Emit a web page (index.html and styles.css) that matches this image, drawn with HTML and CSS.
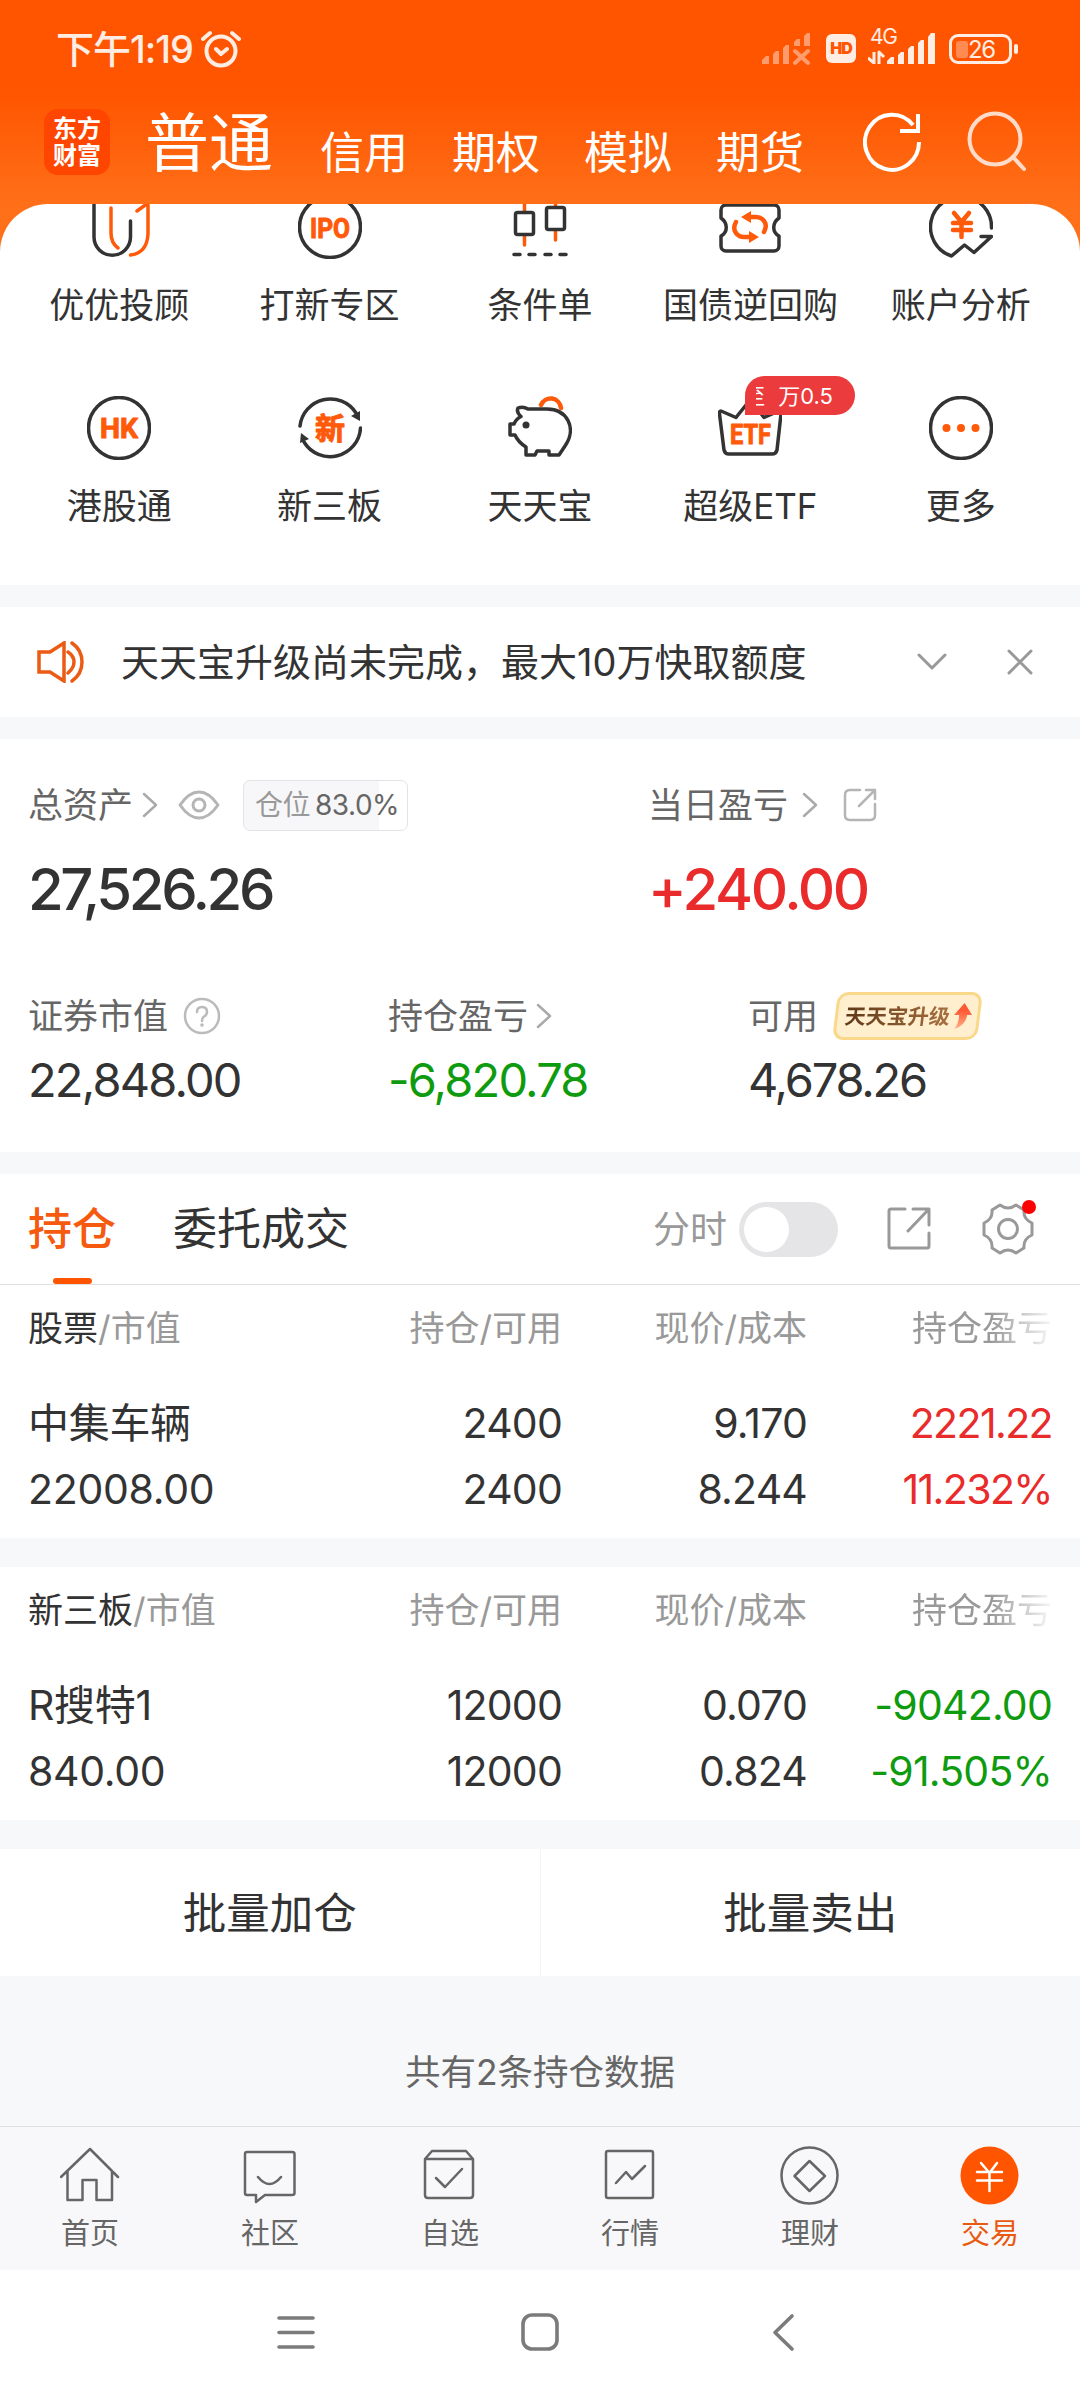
FILE: index.html
```html
<!DOCTYPE html>
<html lang="zh-CN">
<head>
  <meta charset="UTF-8" />
  <meta name="viewport" content="width=device-width, initial-scale=1.0" />
  <title>交易 - 东方财富</title>
  <link rel="stylesheet" href="styles.css">
</head>
<body>
  <header>
    <div class="status-bar">
      <div class="status-left">
        <span class="time">下午1:19</span>
        <svg class="alarm" width="40" height="38" viewBox="0 0 40 38">
          <circle cx="20" cy="21" r="14.5" />
          <path d="M2 9L9 3M38 9L31 3M15 19l5 5 6-5" />
        </svg>
      </div>
      <div class="status-right">
        <svg width="48" height="32" viewBox="0 0 48 32" class="no-signal">
          <path d="M0 31v-4l4-4h3v8zM11 31V21l3-3h3v13zM21 31V15l3-3h3v19zM32 13V9l3-3h3v7zM42 13V3l3-3h3v13z" />
          <path class="cross" d="M33 18l13 12M46 18L33 30" />
        </svg>
        <span class="hd">HD</span>
        <svg width="68" height="42" viewBox="0 0 68 42" class="signal">
          <text x="2" y="20" textLength="28">4G</text>
          <path d="M19 40v-3l4-4h3v7zM30 40V31l3-3h3v12zM40 40V25l3-3h3v18zM50 40V19l3-3h3v24zM60 40V13l3-4h4v31z" />
          <path class="arrows" d="M6 28V40M0 34L6 39M11 40V28L16 33" />
        </svg>
        <div class="battery"><span class="battery-level"></span><span class="battery-text">26</span></div>
      </div>
    </div>
    <nav class="top-nav">
      <div class="logo"><span>东方</span><span>财富</span></div>
      <ul>
        <li class="active">普通</li>
        <li>信用</li>
        <li>期权</li>
        <li>模拟</li>
        <li>期货</li>
      </ul>
      <svg class="refresh" width="60" height="62" viewBox="0 0 60 62">
        <path d="M56 31A27 27.5 0 1 1 50 14M55 3V20H37" />
      </svg>
      <svg class="search" width="60" height="62" viewBox="0 0 60 62">
        <circle cx="28" cy="28" r="25.5" />
        <path d="M46 46L57 58" />
      </svg>
    </nav>
  </header>

  <section class="shortcuts">
    <div class="shortcut">
      <svg class="icon" viewBox="0 0 64 64">
        <path d="M7 0V42a18.2 18.2 0 0 0 36.5 0V26" />
        <path class="orange" d="M24 13V38Q24 48 31 53M50 16L61 8V39Q60 58 43.500 60" />
      </svg>
      <span>优优投顾</span>
    </div>
    <div class="shortcut">
      <svg class="icon" viewBox="0 0 64 64">
        <circle cx="32" cy="32" r="30.500" />
        <text x="12" y="42.500" textLength="40" lengthAdjust="spacingAndGlyphs">IPO</text>
      </svg>
      <span>打新专区</span>
    </div>
    <div class="shortcut">
      <svg class="icon" viewBox="0 0 64 64">
        <path class="orange" d="M16.500 6V17M16.500 40V50M47.500 2V12M47.500 36V45" />
        <rect x="7.500" y="17.500" width="18" height="22" rx="2" />
        <rect x="38.500" y="12.500" width="18" height="22" rx="2" />
        <path d="M6 59.500h6M21 59.500h6M37 59.500h6M52 59.500h6" />
      </svg>
      <span>条件单</span>
    </div>
    <div class="shortcut">
      <svg class="icon" viewBox="0 0 64 64">
        <path d="M8 10H56a5 5 0 0 1 5 5V23C54 28 54 37 61 41V51a5 5 0 0 1-5 5H8a5 5 0 0 1-5-5V41C10 37 10 28 3 23V15a5 5 0 0 1 5-5z" />
        <path class="orange thick" d="M18 27C13 36 20 42 26 42H32M46 37C51 28 44 22 38 22H32" />
        <path class="orange-fill" d="M31 36L41 42L31 48zM33 16L23 22L33 28z" />
      </svg>
      <span>国债逆回购</span>
    </div>
    <div class="shortcut">
      <svg class="icon" viewBox="0 0 64 64">
        <path d="M62.500 33A30.500 30.500 0 1 0 22.500 61L35.500 50L45 57.500L62.500 41.500H52" />
        <path class="orange thick" d="M25 18L32.500 27L40 18M24 28H42M24 35H42M32.500 27V42" />
      </svg>
      <span>账户分析</span>
    </div>
    <div class="shortcut">
      <svg class="icon" viewBox="0 0 64 64">
        <circle cx="32" cy="32" r="30.500" />
        <text x="13" y="42" textLength="38" lengthAdjust="spacingAndGlyphs">HK</text>
      </svg>
      <span>港股通</span>
    </div>
    <div class="shortcut">
      <svg class="icon" viewBox="0 0 64 64">
        <path d="M2 30A30.500 30.500 0 0 1 58 17M62.500 32A30.500 30.500 0 0 1 6 46" />
        <path class="dark-fill" d="M53 20L62 15V25zM3 37L11 43L2 47z" />
        <text class="cjk" x="17" y="43">新</text>
      </svg>
      <span>新三板</span>
    </div>
    <div class="shortcut">
      <svg class="icon" viewBox="0 0 64 64">
        <path class="orange thick" d="M33 9A10.500 11 0 0 1 53 12" />
        <path d="M10 12Q15 10 20 13H37C60 12 69 33 57 50L51 59H41V55H29L27 59H18V51Q10 46 7 39H2V28H6Q8 23 13 20.500Q8 16 10 12z" />
        <circle class="dark-fill" cx="18" cy="29" r="3.500" />
      </svg>
      <span>天天宝</span>
    </div>
    <div class="shortcut">
      <svg class="icon" viewBox="0 0 64 64">
        <path d="M3 15L18 21.500L32 4L46 21.500L61 15Q63 15 63 18L59 54Q58 58 54 58H11Q7 58 6 54L1.500 18Q1 15 3 15z" />
        <text x="12" y="48" textLength="41" lengthAdjust="spacingAndGlyphs">ETF</text>
      </svg>
      <span>超级ETF</span>
      <div class="badge"><span class="badge-clip"><i>至</i></span><span>万0.5</span></div>
    </div>
    <div class="shortcut">
      <svg class="icon" viewBox="0 0 64 64">
        <circle cx="32" cy="32" r="30.500" />
        <circle class="orange-fill" cx="17.500" cy="32" r="4" />
        <circle class="orange-fill" cx="32" cy="32" r="4" />
        <circle class="orange-fill" cx="46.500" cy="32" r="4" />
      </svg>
      <span>更多</span>
    </div>
  </section>

  <section class="notice">
    <svg class="speaker" width="48" height="42" viewBox="0 0 48 42">
      <path d="M2 11H13L27 2V40L13 31H2zM35 2Q45 9 45 21T35 40M31 11Q37 15 37 21T31 32" />
    </svg>
    <p>天天宝升级尚未完成，最大10万快取额度</p>
    <svg class="grey-icon down" width="30" height="20" viewBox="0 0 30 20"><path d="M2 3L15 16L28 3" /></svg>
    <svg class="grey-icon close" width="26" height="26" viewBox="0 0 26 26"><path d="M2 2L24 24M24 2L2 24" /></svg>
  </section>

  <section class="assets">
    <div class="assets-top">
      <div>
        <div class="label">
          <span>总资产</span>
          <svg class="arrow" width="16" height="26" viewBox="0 0 16 26"><path d="M2 2L14 13L2 24" /></svg>
          <svg class="eye" width="42" height="30" viewBox="0 0 42 30">
            <path d="M2 15Q11 2 21 2T40 15Q31 28 21 28T2 15z" />
            <circle cx="21" cy="15" r="6" />
          </svg>
          <span class="position"><em>仓位</em>83.0%</span>
        </div>
        <div class="total">27,526.26</div>
      </div>
      <div>
        <div class="label">
          <span>当日盈亏</span>
          <svg class="arrow wide" width="16" height="26" viewBox="0 0 16 26"><path d="M2 2L14 13L2 24" /></svg>
          <svg class="share" width="34" height="34" viewBox="0 0 34 34">
            <path d="M17 2H7Q2 2 2 7V27Q2 32 7 32H27Q32 32 32 27V16M23 2H32V11M31 3L16 18" />
          </svg>
        </div>
        <div class="total profit red">+240.00</div>
      </div>
    </div>
    <div class="assets-bottom">
      <div>
        <div class="label">
          <span>证券市值</span>
          <svg class="help" width="38" height="38" viewBox="0 0 38 38">
            <circle cx="19" cy="19" r="17" />
            <path d="M14 15Q14 10 19 10T24 15Q24 18 20.500 20Q19 21 19 24" />
            <circle class="dot" cx="19" cy="28" r="1.800" />
          </svg>
        </div>
        <div class="amount">22,848.00</div>
      </div>
      <div>
        <div class="label">
          <span>持仓盈亏</span>
          <svg class="arrow near" width="16" height="26" viewBox="0 0 16 26"><path d="M2 2L14 13L2 24" /></svg>
        </div>
        <div class="amount green">-6,820.78</div>
      </div>
      <div>
        <div class="label">
          <span>可用</span>
          <div class="upgrade">
            <span>天天宝升级</span>
            <svg width="20" height="26" viewBox="0 0 20 26">
              <defs><linearGradient id="up" x1="0" y1="0" x2="0" y2="1"><stop offset="0.3" stop-color="#ff5a36" /><stop offset="1" stop-color="#ffb088" /></linearGradient></defs>
              <path fill="url(#up)" d="M10 0L19 12H14Q14 22 3 26Q7 19 6 12H1z" />
            </svg>
          </div>
        </div>
        <div class="amount cash">4,678.26</div>
      </div>
    </div>
  </section>

  <section class="holdings">
    <div class="tabs">
      <div class="tab active">持仓</div>
      <div class="tab">委托成交</div>
      <span class="minute">分时</span>
      <div class="toggle"></div>
      <svg class="export" width="44" height="44" viewBox="0 0 44 44">
        <path d="M18 2H4Q2 2 2 4V39Q2 41 4 41H40Q42 41 42 39V26M26 2H42V18M41 3L21 24" />
      </svg>
      <div class="settings">
        <svg width="52" height="52" viewBox="0 0 52 52">
          <path d="M18 2Q26 8 34 2L42 7Q41 16 50 20V32Q41 36 42 45L34 50Q26 44 18 50L10 45Q11 36 2 32V20Q11 16 10 7z" />
          <circle cx="26" cy="26" r="9.500" />
        </svg>
        <i class="red-dot"></i>
      </div>
    </div>

    <div class="stock-table">
      <div class="row head">
        <span><b>股票</b>/市值</span><span>持仓/可用</span><span>现价/成本</span><span class="fade">持仓盈亏</span>
      </div>
      <div class="row"><span>中集车辆</span><span>2400</span><span>9.170</span><span class="red">2221.22</span></div>
      <div class="row"><span>22008.00</span><span>2400</span><span>8.244</span><span class="red">11.232%</span></div>
    </div>
    <div class="stock-table">
      <div class="row head">
        <span><b>新三板</b>/市值</span><span>持仓/可用</span><span>现价/成本</span><span class="fade">持仓盈亏</span>
      </div>
      <div class="row"><span>R搜特1</span><span>12000</span><span>0.070</span><span class="green">-9042.00</span></div>
      <div class="row"><span>840.00</span><span>12000</span><span>0.824</span><span class="green">-91.505%</span></div>
    </div>

    <div class="batch">
      <button>批量加仓</button>
      <button>批量卖出</button>
    </div>
    <p class="count">共有2条持仓数据</p>
  </section>

  <footer>
    <div class="foot-item">
      <svg viewBox="0 0 60 60"><path d="M1 31L30 3L58 31M7.500 25V54H22.500V34H36.500V54H52V25" /></svg>
      <span>首页</span>
    </div>
    <div class="foot-item">
      <svg viewBox="0 0 60 60"><path d="M7 6H52Q54.500 6 54.500 8V47Q54.500 49 52 49H25L16 56V49H7Q5 49 5 47V8Q5 6 7 6zM18 31Q29.500 45 41 31" /></svg>
      <span>社区</span>
    </div>
    <div class="foot-item">
      <svg viewBox="0 0 60 60"><path d="M5 13L12 5H46L53 13V49Q53 52 50 52H8Q5 52 5 49zM5 13H53M16 32L25 41L42 23" /></svg>
      <span>自选</span>
    </div>
    <div class="foot-item">
      <svg viewBox="0 0 60 60"><rect x="6" y="5" width="47" height="47" rx="2" /><path d="M16 37L26 26L32 33L45 20" /></svg>
      <span>行情</span>
    </div>
    <div class="foot-item">
      <svg viewBox="0 0 60 60"><circle cx="29.500" cy="29.500" r="28" /><path d="M29.500 15L45 30L29.500 45L14.500 30z" /></svg>
      <span>理财</span>
    </div>
    <div class="foot-item active">
      <svg viewBox="0 0 60 60"><circle cx="29.500" cy="29.500" r="29" /><path d="M21 17L29.500 27L37 17M17 26H42M17 34.500H42M29.500 26V45" /></svg>
      <span>交易</span>
    </div>
  </footer>

  <div class="system-nav">
    <svg viewBox="0 0 40 40"><path d="M3 6H37M3 20.500H37M3 35H37" /></svg>
    <svg viewBox="0 0 40 40"><rect x="3" y="3" width="34" height="34" rx="9" /></svg>
    <svg viewBox="0 0 40 40"><path d="M28 4L11 20.500L28 37" /></svg>
  </div>
</body>
</html>
```
FILE: styles.css
```css
* {
  margin: 0;
  padding: 0;
  box-sizing: border-box;
}

body {
  width: 1080px;
  font-family: Inter, "Noto Sans CJK SC", sans-serif;
  background-color: #f7f8fa;
  color: #333;
  line-height: 1;
}

svg {
  display: block;
  flex: none;
  fill: none;
  stroke-linecap: round;
  stroke-linejoin: round;
}

.red {
  color: #e92b2b;
}

.green {
  color: #0f9b0f;
}

/* header */
header {
  height: 252px;
  background: linear-gradient(#ff5500 0, #ff5500 92px, #ff6f18 204px, #ff7019 252px);
  color: #fff;
}

.status-bar {
  height: 97px;
  padding: 0 62px 0 56px;
  display: flex;
  justify-content: space-between;
  align-items: center;
}

.status-left,
.status-right {
  display: flex;
  align-items: center;
  color: #ffece3;
}

.time {
  font-size: 38px;
  font-weight: 500;
  letter-spacing: -1px;
}

.alarm {
  margin-left: 8px;
  stroke: #ffece3;
  stroke-width: 4;
}

.no-signal {
  fill: #ff9c6d;
}

.cross {
  stroke: #ff9c6d;
  stroke-width: 4;
}

.hd {
  width: 30px;
  height: 29px;
  margin-left: 16px;
  border-radius: 6px;
  background: #ffece3;
  color: #ff5500;
  font-size: 16px;
  font-weight: 900;
  line-height: 29px;
  text-align: center;
  letter-spacing: -1px;
}

.signal {
  margin: -8px 0 0 12px;
  fill: #ffece3;
}

.signal text {
  font-size: 21px;
}

.arrows {
  fill: none;
  stroke: #ffece3;
  stroke-width: 3;
  stroke-linecap: butt;
}

.battery {
  position: relative;
  width: 63px;
  height: 30px;
  margin: 0 6px 0 13px;
  padding: 4px;
  border: 3px solid #ffece3;
  border-radius: 9px;
  display: flex;
}

.battery::after {
  content: "";
  position: absolute;
  right: -9px;
  top: 7px;
  width: 4px;
  height: 10px;
  border-radius: 2px;
  background: #ffece3;
}

.battery-level {
  width: 12px;
  height: 17px;
  border-radius: 3px;
  background: #ff8a52;
}

.battery-text {
  font-size: 24px;
  line-height: 17px;
  letter-spacing: -1.5px;
}

.top-nav {
  height: 107px;
  padding-left: 44px;
  display: flex;
}

.logo {
  width: 66px;
  height: 66px;
  margin-top: 12px;
  border-radius: 14px;
  background: #ff4600;
  display: flex;
  flex-direction: column;
  justify-content: center;
  align-items: center;
  gap: 3px;
  font-size: 24px;
  font-weight: 700;
}

.top-nav ul {
  width: 754px;
  height: 78px;
  padding-left: 35px;
  list-style: none;
  display: flex;
  align-items: flex-end;
  gap: 44px;
  font-size: 44px;
}

.top-nav .active {
  font-size: 64px;
  margin-right: 3px;
}

.refresh {
  margin: 14px 0 0 -1px;
  stroke: #fff;
  stroke-width: 4;
  stroke-linecap: butt;
  stroke-linejoin: miter;
}

.search {
  margin: 14px 0 0 44px;
  stroke: #ffdcca;
  stroke-width: 4;
}

/* shortcuts */
.shortcuts {
  position: relative;
  height: 381px;
  margin-top: -48px;
  padding: 0 14px;
  border-radius: 48px 48px 0 0;
  background: #fff;
  overflow: hidden;
  display: grid;
  grid-template-columns: repeat(5, 1fr);
  grid-auto-rows: 201px;
}

.shortcut {
  position: relative;
  margin-top: -9px;
  display: flex;
  flex-direction: column;
  align-items: center;
  font-size: 35px;
  white-space: nowrap;
}

.icon {
  width: 64px;
  height: 64px;
  margin-bottom: 29px;
  stroke: #333;
  stroke-width: 3.5;
}

.icon text {
  fill: #ff5a0a;
  stroke: #ff5a0a;
  stroke-width: 1;
  font-family: Roboto, sans-serif;
  font-size: 28px;
  font-weight: 700;
}

.icon .cjk {
  font-family: "Noto Sans CJK SC", sans-serif;
  font-size: 30px;
}

.icon .orange {
  stroke: #ff5a0a;
}

.thick {
  stroke-width: 4.5;
}

.orange-fill {
  fill: #ff5a0a;
  stroke: none;
}

.dark-fill {
  fill: #333;
  stroke: none;
}

.badge {
  position: absolute;
  left: 100px;
  top: -20px;
  width: 110px;
  height: 39px;
  padding-left: 11px;
  border-radius: 20px 20px 20px 0;
  background: #eb3b3c;
  color: #fff;
  font-size: 22px;
  display: flex;
  align-items: center;
  gap: 13px;
}

.badge-clip {
  width: 9px;
  overflow: hidden;
  display: flex;
  justify-content: flex-end;
}

.badge-clip i {
  font-style: normal;
}

/* notice */
.notice {
  height: 110px;
  margin: 22px 0;
  padding-left: 37px;
  background: #fff;
  display: flex;
  align-items: center;
}

.speaker {
  stroke: #ec5b13;
  stroke-width: 3.5;
  stroke-linejoin: miter;
}

.notice p {
  width: 794px;
  margin-left: 36px;
  font-size: 38px;
  white-space: nowrap;
}

.grey-icon {
  stroke: #999;
  stroke-width: 3;
}

.down {
  margin-left: 2px;
}

.close {
  margin-left: 60px;
}

/* assets */
.assets {
  height: 413px;
  padding: 38px 28px 0;
  background: #fff;
}

.assets-top {
  display: grid;
  grid-template-columns: 620px 1fr;
  height: 211px;
}

.assets-bottom {
  display: grid;
  grid-template-columns: 360px 360px 1fr;
}

.label {
  height: 56px;
  display: flex;
  align-items: center;
  color: #666;
  font-size: 35px;
}

.arrow {
  margin-left: 9px;
  stroke: #aaa;
  stroke-width: 2.5;
}

.arrow.wide {
  margin-left: 14px;
}

.arrow.near {
  margin-left: 8px;
}

.eye {
  margin-left: 20px;
  stroke: #b5b5b5;
  stroke-width: 3;
}

.position {
  height: 51px;
  width: 165px;
  margin-left: 23px;
  padding-left: 11px;
  border: 1px solid #e3e3e5;
  border-radius: 7px;
  background: linear-gradient(90deg, #f7f7f9 83%, #fff 83%);
  display: flex;
  align-items: center;
  font-size: 28px;
  letter-spacing: -0.5px;
}

.position em {
  margin-right: 5px;
  font-style: normal;
  color: #999;
}

.share {
  margin-left: 25px;
  stroke: #b5b5b5;
  stroke-width: 2.5;
}

.total {
  margin-top: 27px;
  font-size: 58px;
  font-weight: 500;
  line-height: 58px;
  letter-spacing: -3.4px;
}

.total.profit {
  letter-spacing: -2.4px;
}

.help {
  margin-left: 15px;
  stroke: #bbb;
  stroke-width: 2.5;
}

.help .dot {
  fill: #bbb;
  stroke: none;
}

.amount {
  margin-top: 12px;
  font-size: 47px;
  line-height: 48px;
  letter-spacing: -1.8px;
}

.amount.cash {
  letter-spacing: -2.2px;
}

.upgrade {
  width: 145px;
  height: 48px;
  margin-left: 17px;
  padding: 0 0 0 7px;
  border: 3px solid #f9d88a;
  border-radius: 11px;
  background: #ffefce;
  transform: skewX(-7deg);
  display: flex;
  align-items: center;
  gap: 3px;
}

.upgrade span {
  font-size: 21px;
  font-weight: 700;
  white-space: nowrap;
  color: transparent;
  background: linear-gradient(90deg, #5f3818, #a8703f);
  background-clip: text;
  -webkit-background-clip: text;
}

/* holdings */
.tabs {
  height: 111px;
  margin-top: 22px;
  padding-left: 28px;
  background: #fff;
  border-bottom: 1px solid #e0e0e0;
  display: flex;
  align-items: center;
  font-size: 44px;
}

.tab {
  height: 110px;
  margin-right: 57px;
  line-height: 110px;
}

.tab.active {
  color: #f55a0e;
  font-weight: 500;
  display: flex;
  flex-direction: column;
  align-items: center;
}

.tab.active::after {
  content: "";
  flex: none;
  width: 39px;
  height: 6px;
  margin-top: -6px;
  border-radius: 3px;
  background: #ff5500;
}

.minute {
  margin-left: 247px;
  font-size: 37px;
  color: #999;
}

.toggle {
  width: 99px;
  height: 55px;
  margin-left: 12px;
  padding: 5px;
  border-radius: 28px;
  background: #e5e5e7;
}

.toggle::before {
  content: "";
  display: block;
  width: 45px;
  height: 45px;
  border-radius: 50%;
  background: #fff;
}

.export {
  margin-left: 49px;
  stroke: #999;
  stroke-width: 3;
}

.settings {
  position: relative;
  margin-left: 51px;
}

.settings svg {
  stroke: #999;
  stroke-width: 3;
}

.red-dot {
  position: absolute;
  right: -2px;
  top: -3px;
  width: 14px;
  height: 14px;
  border-radius: 50%;
  background: #f00;
}

.stock-table {
  height: 253px;
  margin-bottom: 29px;
  background: #fff;
}

.row {
  height: 66px;
  padding: 0 28px;
  display: grid;
  grid-template-columns: 534px 245px 245px;
  grid-template-columns: 290px 244px 245px 245px;
  align-items: center;
  font-size: 41px;
  letter-spacing: -0.8px;
  text-align: right;
}

.row span:first-child {
  text-align: left;
  letter-spacing: -0.3px;
}

.row .red {
  letter-spacing: -1.6px;
}

.row.head {
  height: 86px;
  margin-bottom: 19px;
  font-size: 35px;
  color: #999;
}

.row.head span {
  letter-spacing: 0;
}

.row.head b {
  font-weight: 400;
  color: #333;
}

.fade {
  -webkit-mask-image: linear-gradient(90deg, #000 75%, transparent 102%);
  mask-image: linear-gradient(90deg, #000 75%, transparent 102%);
}

.batch {
  height: 127px;
  background: #fff;
  display: flex;
}

.batch button {
  flex: 1;
  padding-bottom: 5px;
  border: none;
  background: none;
  font-family: inherit;
  font-size: 43.5px;
  color: #333;
}

.batch button + button {
  border-left: 1px solid #f4f4f6;
}

.count {
  height: 150px;
  padding-top: 79px;
  text-align: center;
  font-size: 35.5px;
  color: #666;
}

/* bottom bar */
footer {
  height: 144px;
  padding-top: 19px;
  background: #f8f8fa;
  border-top: 1px solid #e0e1e3;
  display: grid;
  grid-template-columns: repeat(6, 1fr);
}

.foot-item {
  display: flex;
  flex-direction: column;
  align-items: center;
  font-size: 29px;
  color: #666;
}

.foot-item svg {
  width: 60px;
  height: 60px;
  margin-bottom: 13px;
  stroke: #666;
  stroke-width: 2.5;
}

.foot-item.active {
  color: #e85a10;
}

.foot-item.active svg {
  stroke: #fff;
}

.foot-item.active circle {
  fill: #ff5500;
  stroke: none;
}

.system-nav {
  height: 130px;
  padding-bottom: 6px;
  background: #fff;
  display: flex;
  justify-content: center;
  align-items: center;
  gap: 204px;
}

.system-nav svg {
  width: 40px;
  height: 40px;
  stroke: #7b7b7b;
  stroke-width: 3.6;
}
```
